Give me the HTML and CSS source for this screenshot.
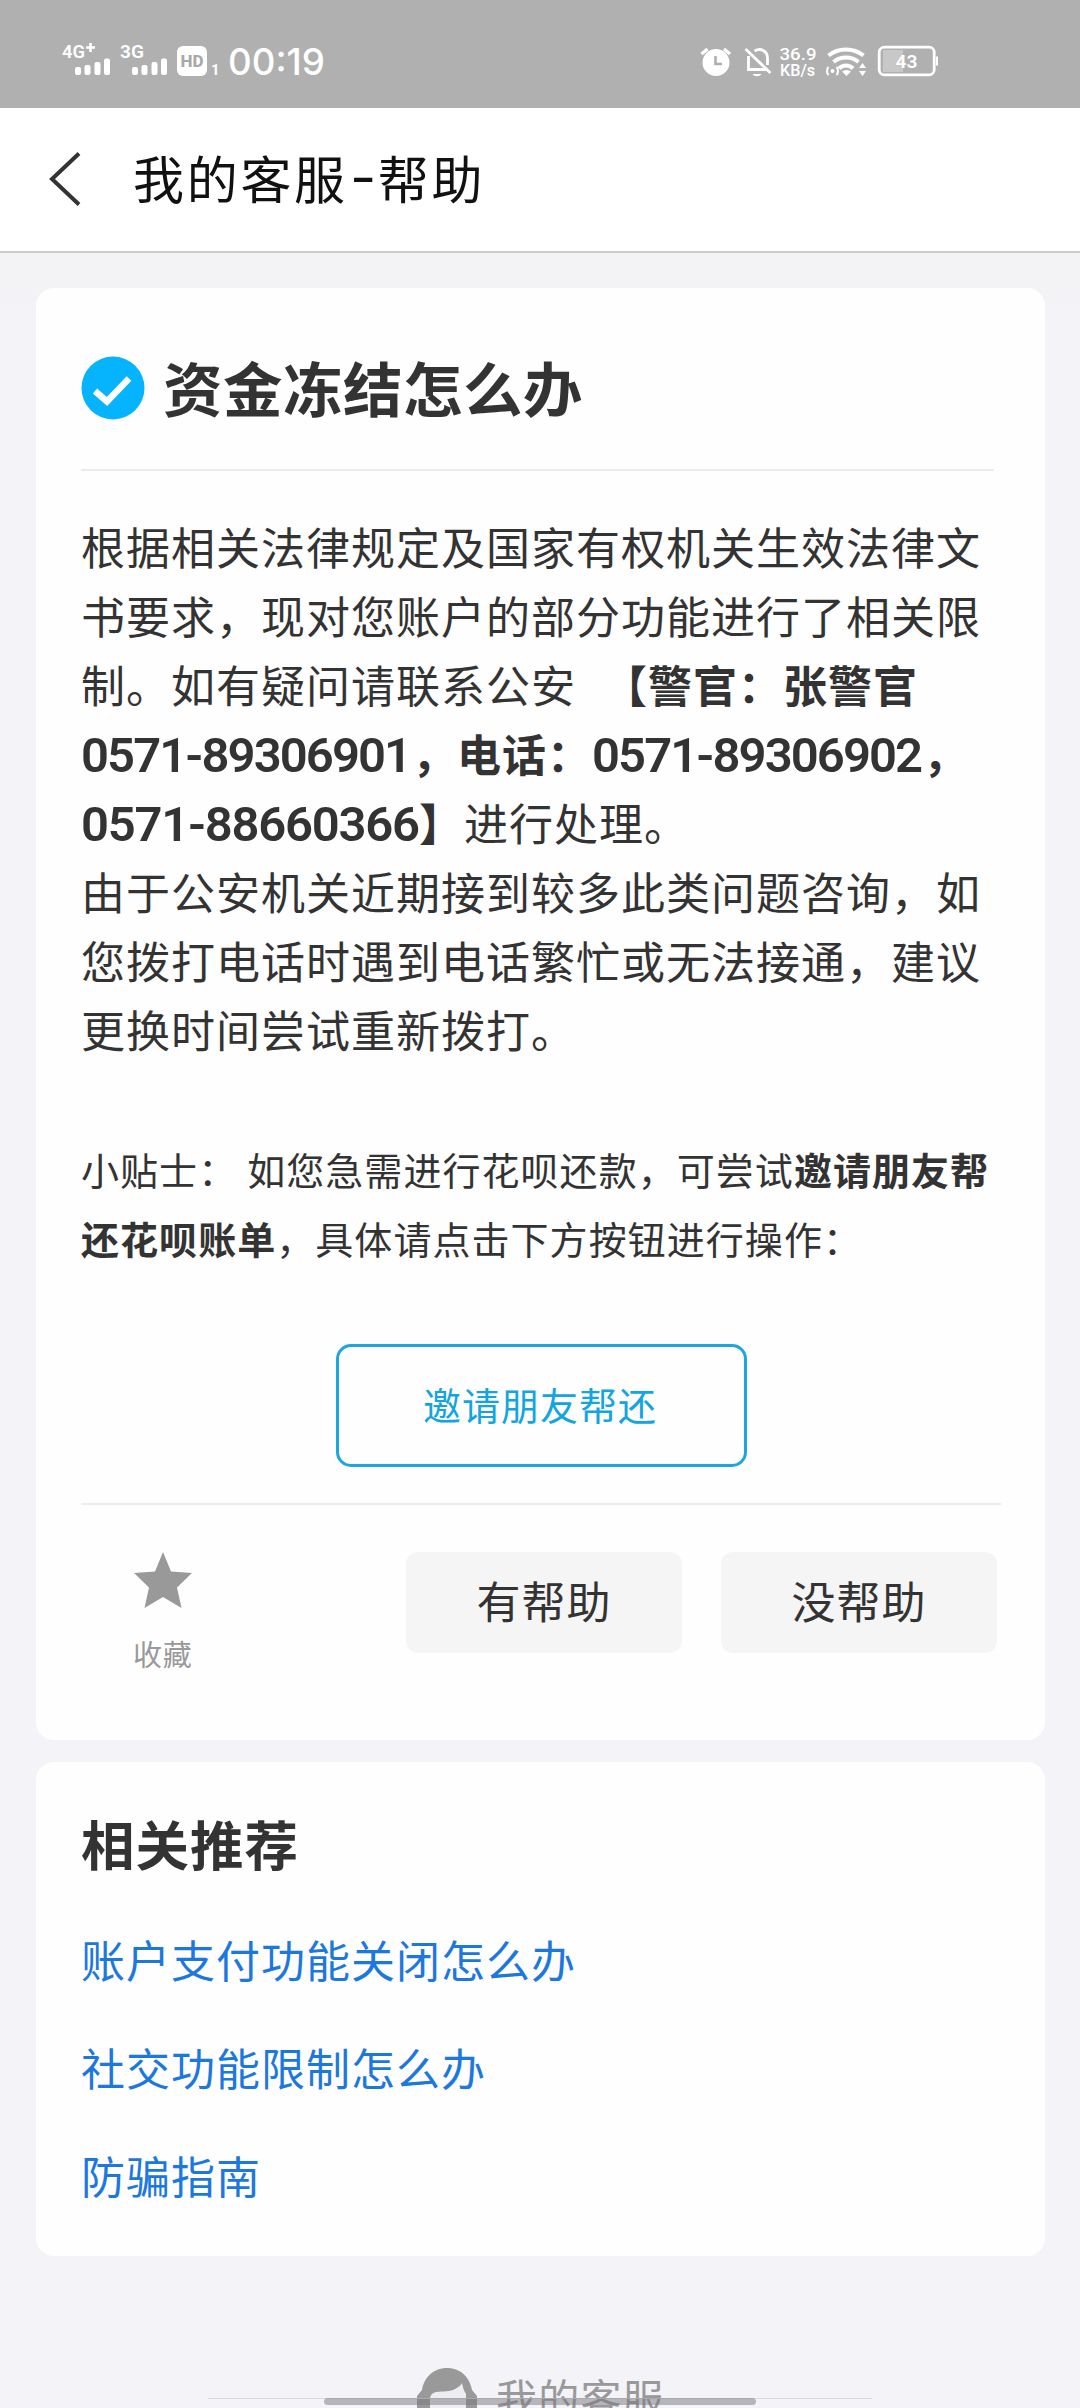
FILE: index.html
```html
<!DOCTYPE html>
<html lang="zh-CN">
<head>
<meta charset="utf-8">
<title>我的客服-帮助</title>
<link rel="stylesheet" href="styles.css">
</head>
<body>
<div class="screen">
  <header class="status">
    <svg class="status-left" width="280" height="40" viewBox="60 40 280 40" fill="#fff">
      <text x="62" y="58" font-size="18" font-weight="600" textLength="23" lengthAdjust="spacingAndGlyphs">4G</text>
      <path d="M86 47.500h9M90.500 43v9" stroke="#fff" stroke-width="2.600"/>
      <rect x="75" y="67" width="6" height="8" rx="2"/><rect x="84.500" y="65" width="6" height="10" rx="2"/><rect x="94.500" y="62" width="6" height="13" rx="2"/><rect x="104" y="58.500" width="6" height="16.500" rx="2"/>
      <text x="120" y="58" font-size="18" font-weight="600" textLength="24" lengthAdjust="spacingAndGlyphs">3G</text>
      <rect x="132" y="67" width="6" height="8" rx="2"/><rect x="141.500" y="65" width="6" height="10" rx="2"/><rect x="151.500" y="62" width="6" height="13" rx="2"/><rect x="161" y="58.500" width="6" height="16.500" rx="2"/>
      <rect x="177" y="46" width="30" height="30" rx="6"/>
      <text class="hd" x="180.500" y="67" font-size="16.500" textLength="23" lengthAdjust="spacingAndGlyphs">HD</text>
      <text x="211" y="75" font-size="15" font-weight="700">1</text>
      <text class="clock" x="228" y="74.500" textLength="97" lengthAdjust="spacingAndGlyphs">00:19</text>
    </svg>
    <svg class="status-right" width="250" height="40" viewBox="696 40 250 40" fill="none" stroke="#fff">
      <circle cx="717" cy="62.500" r="13.500" fill="#fff" stroke="none"/>
      <path d="M702.500 54l6-5M731 54l-6-5" stroke-width="3.200"/>
      <path d="M716.500 56v8h6.500" stroke="#b0b0b0" stroke-width="2.600"/>
      <path d="M749.500 56v13.500h18M746.500 49l25 24M755.500 51c7-4 13 1 13 7v7" stroke-width="2.800"/>
      <path d="M753.500 74h9c-2 3-7 3-9 0z" fill="#fff" stroke="none"/>
      <g class="speed"><text x="780.500" y="60" textLength="37" lengthAdjust="spacingAndGlyphs">36.9</text><text x="781" y="76" textLength="35" lengthAdjust="spacingAndGlyphs">KB/s</text></g>
      <path d="M829.500 55.500c10-8 25-8 35 0M834.500 62c7-6 18-6 25 0M840 68.500c4-4 10-4 14 0" stroke-width="4"/>
      <path d="M843 71.500c3-2 6-2 9 0l-4.500 4.500z" fill="#fff" stroke="none"/>
      <circle cx="833.500" cy="71" r="2" fill="#fff" stroke="none"/>
      <path d="M829.500 67c-2 2-2 6 0 8M837.500 67c2 2 2 6 0 8" stroke-width="2"/>
      <path d="M860 68l3.500-5 3.500 5zM860 71l3.500 5 3.500-5z" fill="#fff" stroke="none"/>
      <path d="M884 50h20v22h-20z" fill="#c8c8c8" stroke="none"/>
      <rect x="880.200" y="47.200" width="55" height="27.600" rx="5" stroke-width="2.800"/>
      <path d="M938 56.500v9" stroke-width="2"/>
      <text class="battery" x="896.500" y="67.500" textLength="22" lengthAdjust="spacingAndGlyphs">43</text>
    </svg>
  </header>

  <nav class="nav">
    <svg width="32" height="56" viewBox="0 0 32 56" fill="none" stroke="#333" stroke-width="4"><path d="M30 2.500L3 28l27 25.500"/></svg>
    <h1>我的客服<span class="dash">-</span>帮助</h1>
  </nav>

  <main class="content">
    <section class="card answer">
      <div class="question">
        <svg width="64" height="64" viewBox="0 0 64 64"><circle cx="32" cy="32" r="31.500" fill="#06b4fd"/><path d="M14 35l12 10.500 22-23" fill="none" stroke="#fff" stroke-width="6.500"/></svg>
        <h2>资金冻结怎么办</h2>
      </div>
      <div class="body">
        <p>根据相关法律规定及国家有权机关生效法律文<br>书要求，现对您账户的部分功能进行了相关限<br>制。如有疑问请联系公安<strong class="officer">【警官：张警官</strong><br><strong><span class="num">0571-89306901</span>，电话：<span class="num">0571-89306902</span>，</strong><br><strong><span class="num last">0571-88660366</span>】</strong>进行处理。<br>由于公安机关近期接到较多此类问题咨询，如<br>您拨打电话时遇到电话繁忙或无法接通，建议<br>更换时间尝试重新拨打。</p>
        <p class="tip">小贴士：<span class="gap"></span>如您急需进行花呗还款，可尝试<strong>邀请朋友帮<br>还花呗账单</strong>，具体请点击下方按钮进行操作：</p>
      </div>
      <button class="invite">邀请朋友帮还</button>
      <div class="feedback">
        <div class="favorite">
          <svg width="60" height="58" viewBox="0 0 60 58"><path fill="#999" d="M30 0l8 19.500L59 21 44 35.500 48.500 56 30 45 11.500 56 16 35.500 1 21l21-1.500z"/></svg>
          <span>收藏</span>
        </div>
        <button class="vote">有帮助</button>
        <button class="vote">没帮助</button>
      </div>
    </section>

    <section class="card related">
      <h3>相关推荐</h3>
      <a>账户支付功能关闭怎么办</a>
      <a>社交功能限制怎么办</a>
      <a>防骗指南</a>
    </section>
  </main>

  <footer class="footer">
    <svg width="62" height="60" viewBox="0 0 62 60"><path fill="#999" d="M31 0C17 0 8 10 6 22l-5 6v22h60V28l-5-6C54 10 45 0 31 0z"/><path fill="#ededf2" d="M14 50V32c0-5 2-7 6-8 8-1 14 0 19-3 4-2 6-4 7-6 1 5 2 8 4 11v24z"/></svg>
    <span>我的客服</span>
  </footer>
  <div class="baseline"></div>
  <div class="home-bar"></div>
</div>
</body>
</html>
```
FILE: styles.css
```css
* { box-sizing: border-box; margin: 0; padding: 0; }
body {
  background: #f3f3f8;
  color: #333;
  font-family: "Noto Sans CJK SC", sans-serif;
}
button { border: 0; font-family: inherit; color: inherit; }
.screen {
  position: relative;
  width: 1080px;
  height: 2408px;
  overflow: hidden;
  display: flex;
  flex-direction: column;
}

/* system status bar */
.status {
  height: 108px;
  flex: none;
  display: flex;
  justify-content: space-between;
  padding: 40px 135px 0 60px;
  background: #b0b0b0;
}
.status text { font-family: Roboto, sans-serif; }
.status .hd { fill: #a8a8a8; font-weight: 800; }
.status .clock { font-family: Inter, sans-serif; font-size: 37px; font-weight: 500; }
.speed text { fill: #fff; stroke: none; font-size: 17px; font-weight: 500; }
.status .battery { fill: #fff; stroke: none; font-size: 18px; font-weight: 600; }

/* title bar */
.nav {
  height: 145px;
  flex: none;
  display: flex;
  align-items: center;
  gap: 52px;
  padding: 0 49px 1px;
  background: #fff;
  border-bottom: 2px solid #ccc;
}
h1 {
  font-size: 51px;
  font-weight: 400;
  letter-spacing: 2.7px;
  line-height: 72px;
  padding-bottom: 5px;
  color: #111;
}
.dash { display: inline-block; width: 30px; text-align: center; transform: translate(2px, -6px) scale(1.4, 1.2); }

.content {
  display: flex;
  flex-direction: column;
  gap: 22px;
  padding: 35px 35px 0 36px;
  background: linear-gradient(#f3f3f4, #f3f3f8 70px);
}
.card { border-radius: 18px; background: #fefefe; padding: 0 44px 0 45px; }

/* answer card */
.answer { height: 1452px; }
.question {
  height: 183px;
  display: flex;
  align-items: center;
  gap: 18px;
  padding-top: 19px;
  margin-right: 7px;
  border-bottom: 2px solid #ebebeb;
}
h2 { font-size: 59.5px; letter-spacing: 0.5px; line-height: 84px; padding-bottom: 4px; }
.body {
  margin: 41px -30px 0 0;
  font-size: 44px;
  letter-spacing: 1px;
  line-height: 69px;
  white-space: nowrap;
}
.body p { height: 552px; }
.officer { padding-left: 27px; }
.num {
  display: inline-block;
  width: 331px;
  font-family: Roboto, sans-serif;
  font-size: 49px;
  font-weight: 600;
  letter-spacing: -1.9px;
  line-height: 60px;
}
.num.last { width: 338px; letter-spacing: -1.25px; }
.body .tip {
  height: 138px;
  margin-top: 70px;
  font-size: 38px;
  letter-spacing: 1.05px;
}
.gap { display: inline-block; width: 10px; }
.invite {
  display: block;
  width: 411px;
  height: 123px;
  margin: 72px 0 36px 255px;
  padding-bottom: 4px;
  border: 3px solid #1ba7dc;
  border-radius: 15px;
  background: #fefefe;
  color: #12a5df;
  font-size: 38px;
  letter-spacing: 1px;
  text-indent: -3px;
}
.feedback {
  display: flex;
  gap: 39px;
  padding-top: 47px;
  border-top: 2px solid #ececec;
}
.favorite {
  width: 286px;
  display: flex;
  flex-direction: column;
  align-items: flex-start;
  padding-left: 52px;
  gap: 21px;
  color: #999;
  font-size: 29px;
  letter-spacing: 0.8px;
  line-height: 44px;
}
.vote {
  width: 276px;
  height: 101px;
  padding-bottom: 5px;
  border-radius: 12px;
  background: #f5f5f5;
  font-size: 44px;
  letter-spacing: 1px;
}

/* related questions */
.related {
  height: 494px;
  display: flex;
  flex-direction: column;
  padding-top: 43px;
}
h3 { font-size: 53.5px; letter-spacing: 1px; line-height: 76px; margin-bottom: 24px; }
.related a { color: #1d78de; font-size: 44px; letter-spacing: 1px; line-height: 108px; }

/* service entry cut by the screen edge */
.footer {
  height: 40px;
  margin-top: 112px;
  display: flex;
  gap: 18px;
  padding-left: 416px;
  color: #999;
  font-size: 41px;
  letter-spacing: 1.2px;
  line-height: 56px;
  overflow: hidden;
}
.footer svg { flex: none; }
.baseline {
  position: absolute;
  left: 208px;
  right: 208px;
  bottom: 9px;
  height: 1px;
  background: #d9d9de;
}
.home-bar {
  position: absolute;
  left: 324px;
  bottom: 3px;
  width: 432px;
  height: 7px;
  border-radius: 4px;
  background: rgba(120, 120, 128, 0.5);
}
```
